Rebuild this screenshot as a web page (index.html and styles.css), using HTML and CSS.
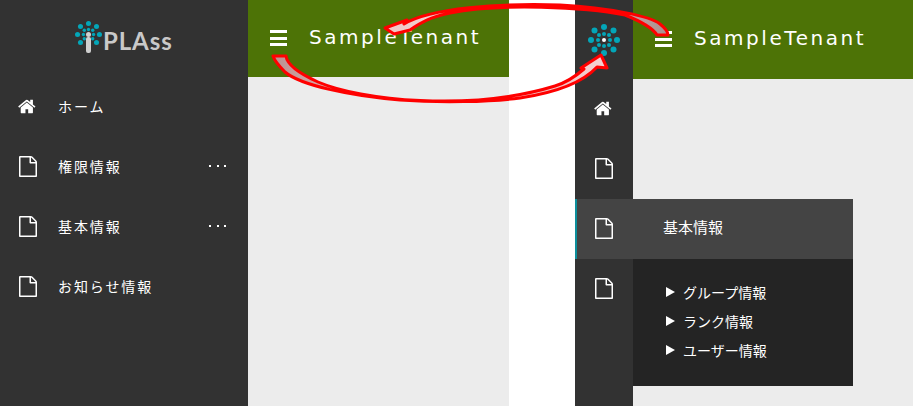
FILE: index.html
```html
<!DOCTYPE html>
<html lang="ja">
<head>
<meta charset="utf-8">
<title>iPLAss</title>
<link rel="stylesheet" href="styles.css">
</head>
<body>
<svg class="sprite" width="0" height="0">
  <symbol id="i-home" viewBox="0 0 1792 1792"><path d="M1408 992v480q0 26-19 45t-45 19h-384v-384h-256v384h-384q-26 0-45-19t-19-45v-480q0-1 .5-3t.5-3l575-474 575 474q1 2 1 6zm223-69l-62 74q-8 9-21 11h-3q-13 0-21-7l-692-577-692 577q-12 8-24 7-13-2-21-11l-62-74q-8-10-7-23.500t11-21.500l719-599q32-26 76-26t76 26l244 204v-195q0-14 9-23t23-9h192q14 0 23 9t9 23v408l219 182q10 8 11 21.500t-7 23.500z"/></symbol>
  <symbol id="i-file" viewBox="128 0 1536 1792"><path d="M1596 380q28 28 48 76t20 88v1152q0 40-28 68t-68 28h-1344q-40 0-68-28t-28-68v-1600q0-40 28-68t68-28h896q40 0 88 20t76 48zm-444-244v376h376q-10-29-22-41l-313-313q-12-12-41-22zm384 1528v-1024h-416q-40 0-68-28t-28-68v-416h-768v1536h1280z"/></symbol>
  <symbol id="i-tree" viewBox="-16 -16 32 32">
    <g class="dot-teal">
      <circle cx="0" cy="-13" r="3"/><circle cx="-9.500" cy="-9.500" r="3"/><circle cx="9.500" cy="-9.500" r="3"/>
      <circle cx="-13" cy="0" r="3"/><circle cx="13" cy="0" r="3"/><circle cx="-9.500" cy="9.500" r="3"/><circle cx="9.500" cy="9.500" r="3"/>
      <circle cx="0" cy="-6" r="2"/><circle cx="-5" cy="-5" r="2"/><circle cx="5" cy="-5" r="2"/>
      <circle cx="-6" cy="0" r="2"/><circle cx="6" cy="0" r="2"/>
      <circle cx="-5" cy="5" r="2"/><circle cx="5" cy="5" r="2"/>
    </g>
  </symbol>
</svg>

<section class="panel panel-open">
  <aside class="sidebar sidebar-wide">
    <div class="logo">
      <span class="logo-mark">
        <svg class="logo-tree" width="27" height="27"><use href="#i-tree"/></svg>
        <span class="logo-seed"></span>
        <span class="logo-stem"></span>
      </span>
      <span class="logo-text">PLAss</span>
    </div>
    <nav>
      <a class="nav-row"><svg class="icon icon-home"><use href="#i-home"/></svg><span class="nav-label">ホーム</span></a>
      <a class="nav-row"><svg class="icon icon-file"><use href="#i-file"/></svg><span class="nav-label">権限情報</span><span class="more"><i></i><i></i><i></i></span></a>
      <a class="nav-row"><svg class="icon icon-file"><use href="#i-file"/></svg><span class="nav-label">基本情報</span><span class="more"><i></i><i></i><i></i></span></a>
      <a class="nav-row"><svg class="icon icon-file"><use href="#i-file"/></svg><span class="nav-label">お知らせ情報</span></a>
    </nav>
  </aside>
  <div class="content">
    <header class="topbar topbar-open">
      <span class="burger"><i></i><i></i><i></i></span>
      <span class="tenant">SampleTenant</span>
    </header>
    <main class="main"></main>
  </div>
</section>

<section class="panel panel-closed">
  <aside class="sidebar sidebar-narrow">
    <div class="logo logo-small">
      <span class="logo-mark-small">
        <svg width="32" height="32" viewBox="-16 -16 32 32"><use href="#i-tree" x="-16" y="-16" width="32" height="32"/><circle class="dot-teal" cx="0" cy="13" r="3"/><circle class="dot-teal" cx="0" cy="6" r="2"/></svg>
        <span class="logo-seed-small"></span>
      </span>
    </div>
    <nav>
      <a class="nav-row nav-row-narrow"><svg class="icon icon-home"><use href="#i-home"/></svg></a>
      <a class="nav-row nav-row-narrow"><svg class="icon icon-file"><use href="#i-file"/></svg></a>
      <div class="nav-row nav-row-narrow nav-row-active">
        <div class="flyout">
          <div class="flyout-head">基本情報</div>
          <ul class="flyout-list">
            <li>グループ情報</li>
            <li>ランク情報</li>
            <li>ユーザー情報</li>
          </ul>
        </div>
        <svg class="icon icon-file icon-over"><use href="#i-file"/></svg>
      </div>
      <a class="nav-row nav-row-narrow"><svg class="icon icon-file"><use href="#i-file"/></svg></a>
    </nav>
  </aside>
  <div class="content">
    <header class="topbar topbar-closed">
      <span class="burger"><i></i><i></i><i></i></span>
      <span class="tenant">SampleTenant</span>
    </header>
    <main class="main"></main>
  </div>
</section>

<svg class="arrows" width="913" height="406" viewBox="0 0 913 406">
  <defs>
    <linearGradient id="g1" x1="0" y1="0" x2="1" y2="0">
      <stop offset="0" stop-color="#b99090"/><stop offset=".15" stop-color="#d8a8a8"/><stop offset=".85" stop-color="#f0c4c4"/><stop offset="1" stop-color="#f4d0d0"/>
    </linearGradient>
    <linearGradient id="g2" x1="0" y1="0" x2="1" y2="0">
      <stop offset="0" stop-color="#f0c4c4"/><stop offset=".15" stop-color="#f0d0d0"/><stop offset=".85" stop-color="#c8a0a0"/><stop offset="1" stop-color="#a89090"/>
    </linearGradient>
  </defs>
  <path class="arrow" fill="url(#g1)" d="M273 56 L286 56 C287 64 296 72 318 82 C360 100 470 112 555 86 C568 82 576 76 584 69 L581 68 L601 55 L607 68 L597 67 C585 80 560 92 520 98 C490 102 440 103 400 100 C350 96 300 85 285 72 C279 66 275 62 273 56 Z"/>
  <path class="arrow" fill="url(#g2)" d="M385 28 L407 20 L404 24 C430 8 500 3 560 5 C610 8 650 16 660 24 C665 28 668 31 668 35 L657 35 C652 27 640 21 625 15 C585 7 500 3 450 13 C430 17 420 23 410 30 L394 34 Z"/>
</svg>
</body>
</html>
```
FILE: styles.css
```css
* { box-sizing: border-box; }
html, body { margin: 0; height: 100%; }
body {
  width: 913px;
  height: 406px;
  overflow: hidden;
  position: relative;
  display: flex;
  gap: 66px;
  background: #fff;
  color: #fff;
  font-family: "Noto Sans CJK JP", "Liberation Sans", sans-serif;
  font-size: 14px;
}
.sprite { position: absolute; }
.panel { display: flex; height: 406px; flex: none; }
.panel-open { width: 509px; }
.panel-closed { width: 338px; }

.sidebar { background: #323232; flex: none; }
.sidebar-wide { width: 248px; }
.sidebar-narrow { width: 58px; }

.logo { height: 77px; display: flex; align-items: flex-start; justify-content: flex-start; }
.logo-mark { position: relative; display: block; width: 27px; height: 52px; margin: 21px 0 0 75px; flex: none; }
.logo-tree { display: block; }
.logo-seed { position: absolute; left: 11px; top: 11px; width: 5px; height: 5px; border-radius: 50%; background: #d0d0d0; }
.logo-stem { position: absolute; left: 11px; top: 16px; width: 5px; height: 16px; background: #cfcfcf; border-radius: 2px; }
.logo-text {
  margin: 26px 0 0 1px;
  font-family: Lato, "Liberation Sans", sans-serif;
  font-weight: 700;
  font-size: 24px;
  line-height: 30px;
  letter-spacing: .9px;
  color: #c9c9c9;
}
.logo-small { height: 79px; align-items: center; justify-content: center; }
.logo-mark-small { position: relative; display: block; width: 32px; height: 32px; }
.logo-mark-small svg { display: block; }
.logo-seed-small { position: absolute; left: 14px; top: 14px; width: 4px; height: 4px; border-radius: 50%; background: #fff; }
.dot-teal { fill: #03a6b8; }

.nav-row { display: flex; align-items: center; height: 60px; padding-left: 19px; padding-bottom: 2px; position: relative; }
.nav-row-narrow { padding-left: 20px; }
.icon { fill: #fff; flex: none; display: block; }
.icon-home { width: 19px; height: 19px; margin-left: -1px; }
.icon-file { width: 18px; height: 21px; }
.nav-label { margin-left: 21px; letter-spacing: 1.900px; line-height: 20px; }
.more { margin-left: auto; margin-right: 22px; display: flex; gap: 5.500px; }
.more i { display: block; width: 2px; height: 2px; background: #fff; }

.nav-row-active { z-index: 2; }
.icon-over { position: relative; z-index: 3; }
.flyout { position: absolute; left: 0; top: 0; width: 278px; }
.flyout-head {
  height: 60px;
  background: #444;
  border-left: 2px solid #0c8f9c;
  padding-left: 86px;
  padding-bottom: 6px;
  display: flex;
  align-items: center;
  font-size: 15px;
}
.flyout-list {
  list-style: none;
  margin: 0 0 0 58px;
  padding: 19px 0 0 32px;
  height: 127px;
  background: #242424;
}
.flyout-list li { height: 29px; line-height: 29px; padding-left: 18px; position: relative; }
.flyout-list li::before {
  content: "";
  position: absolute;
  left: 1px;
  top: 9px;
  border-left: 9px solid #fff;
  border-top: 5.500px solid transparent;
  border-bottom: 5.500px solid transparent;
}

.content { flex: 1; display: flex; flex-direction: column; min-width: 0; }
.topbar { background: #4d7306; display: flex; align-items: center; flex: none; }
.topbar-open { height: 77px; padding-left: 22px; }
.topbar-closed { height: 79px; padding-left: 22px; }
.main { flex: 1; background: #ececec; }
.burger { display: flex; flex-direction: column; gap: 3.500px; width: 17px; flex: none; margin-bottom: 1px; }
.burger i { display: block; height: 3px; background: #fff; }
.tenant {
  margin-left: 22px;
  font-family: "DejaVu Sans", sans-serif;
  font-size: 20px;
  letter-spacing: 2.550px;
  line-height: 24px;
  padding-bottom: 4px;
}

.arrows { position: absolute; left: 0; top: 0; pointer-events: none; }
.arrow { stroke: #f00; stroke-width: 3; stroke-linejoin: round; }
```
